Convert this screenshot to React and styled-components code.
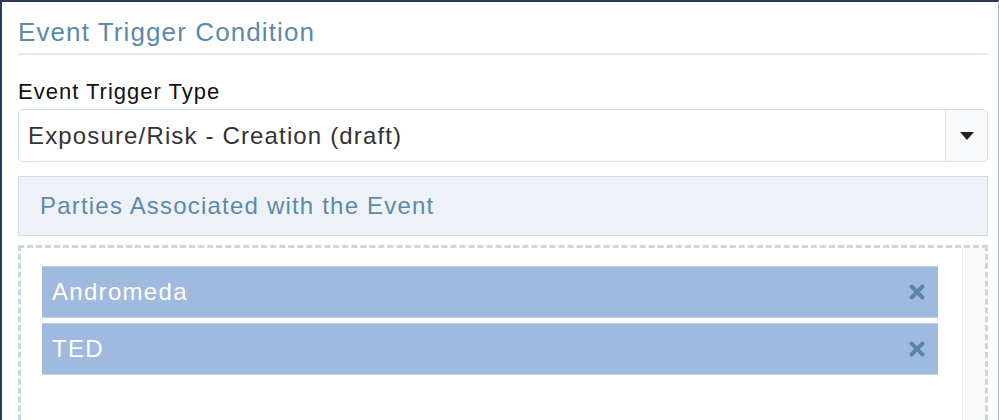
import styled, { createGlobalStyle } from "styled-components";
import { FaTimes } from "react-icons/fa";

const GlobalStyle = createGlobalStyle`
  html, body {
    margin: 0;
    padding: 0;
    background: #ffffff;
    font-family: "Liberation Sans", Arial, sans-serif;
  }
`;

const Frame = styled.div`
  box-sizing: border-box;
  width: 999px;
  height: 420px;
  overflow: hidden;
  border-top: 2px solid #2b3a5c;
  border-left: 2px solid #2b3a5c;
  border-right: 1px solid #b3bccb;
  padding: 0 10px 0 16px;
  background: #ffffff;
`;

const Title = styled.h2`
  margin: 0;
  padding: 15px 0 6px 0;
  font-size: 26px;
  line-height: 30px;
  letter-spacing: 1.1px;
  font-weight: 400;
  color: #5b8aab;
  border-bottom: 2px solid #e2e8f3;
`;

const Label = styled.div`
  margin-top: 25px;
  font-size: 22px;
  line-height: 24px;
  letter-spacing: 1px;
  color: #111111;
`;

const Select = styled.div`
  box-sizing: border-box;
  margin-top: 5px;
  height: 53px;
  display: flex;
  border: 1px solid #cfdde8;
  border-radius: 5px;
  overflow: hidden;
`;

const SelectValue = styled.div`
  flex: 1;
  display: flex;
  align-items: center;
  padding-left: 9px;
  font-size: 24px;
  letter-spacing: 1.15px;
  color: #333333;
`;

const SelectButton = styled.div`
  width: 41px;
  display: flex;
  align-items: center;
  justify-content: center;
  border-left: 1px solid #dbe4ec;
  background: #f7f9fb;
`;

const Section = styled.div`
  box-sizing: border-box;
  margin-top: 14px;
  height: 60px;
  display: flex;
  align-items: center;
  padding-left: 21px;
  background: #eef2f7;
  border: 1px solid #cfdde8;
  font-size: 24px;
  letter-spacing: 1.2px;
  color: #5b8aab;
`;

const DropZone = styled.div`
  box-sizing: border-box;
  margin-top: 9px;
  height: 220px;
  display: flex;
  border: 3px dashed #c9d7e1;
  padding: 0 0 0 21px;
`;

const List = styled.div`
  flex: 1;
  display: flex;
  flex-direction: column;
  gap: 5px;
  padding-top: 18px;
  padding-right: 24px;
`;

const Party = styled.div`
  box-sizing: border-box;
  height: 52px;
  display: flex;
  align-items: center;
  justify-content: space-between;
  padding: 0 10px 0 10px;
  background: #a0b9de;
  border-top: 1px solid #bccde8;
  border-bottom: 1px solid #c2d2ea;
  color: #ffffff;
  font-size: 24px;
  letter-spacing: 1.3px;
`;

const Remove = styled.span`
  display: flex;
  color: #5a86a6;
  font-size: 22px;
`;

const ScrollTrack = styled.div`
  width: 22px;
  background: #f8f8f8;
  border-left: 1px solid #ebebeb;
`;

const Caret = () => (
  <svg width="14" height="8" viewBox="0 0 14 8">
    <path d="M0 0 L14 0 L7 8 Z" fill="#222" />
  </svg>
);

const parties = ["Andromeda", "TED"];

export default function App() {
  return (
    <>
      <GlobalStyle />
      <Frame>
        <Title>Event Trigger Condition</Title>
        <Label>Event Trigger Type</Label>
        <Select>
          <SelectValue>Exposure/Risk - Creation (draft)</SelectValue>
          <SelectButton>
            <Caret />
          </SelectButton>
        </Select>
        <Section>Parties Associated with the Event</Section>
        <DropZone>
          <List>
            {parties.map((p) => (
              <Party key={p}>
                {p}
                <Remove>
                  <FaTimes />
                </Remove>
              </Party>
            ))}
          </List>
          <ScrollTrack />
        </DropZone>
      </Frame>
    </>
  );
}
